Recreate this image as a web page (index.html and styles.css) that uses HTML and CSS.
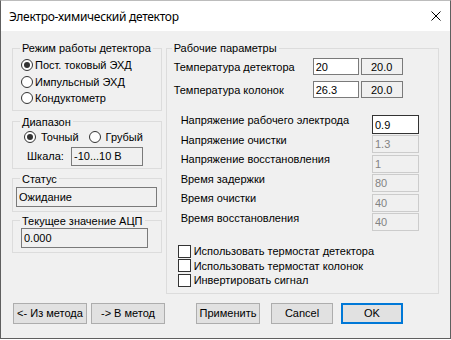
FILE: index.html
```html
<!DOCTYPE html>
<html lang="ru">
<head>
  <meta charset="UTF-8">
  <title>Электро-химический детектор</title>
  <link rel="stylesheet" href="styles.css">
</head>
<body>
  <div class="window">
    <div class="titlebar">
      <span class="title">Электро-химический детектор</span>
      <svg class="close" width="10" height="10" viewBox="0 0 10 10">
        <path d="M0.5 0.5 L9.5 9.5 M9.5 0.5 L0.5 9.5" stroke="#000" stroke-width="1" fill="none"/>
      </svg>
    </div>

    <div class="client">
      <div class="main">
        <div class="left">
          <fieldset class="group mode">
            <legend>Режим работы детектора</legend>
            <div class="inner">
              <div class="radio-row"><span class="radio checked"></span>Пост. токовый ЭХД</div>
              <div class="radio-row"><span class="radio"></span>Импульсный ЭХД</div>
              <div class="radio-row"><span class="radio"></span>Кондуктометр</div>
            </div>
          </fieldset>

          <fieldset class="group range">
            <legend>Диапазон</legend>
            <div class="inner">
              <div class="radio-line">
                <div class="radio-row wide"><span class="radio checked"></span>Точный</div>
                <div class="radio-row wide"><span class="radio"></span>Грубый</div>
              </div>
              <div class="scale-row">
                <span class="scale-label">Шкала:</span>
                <input class="field readonly scale" type="text" value="-10...10 В" readonly>
              </div>
            </div>
          </fieldset>

          <fieldset class="group status">
            <legend>Статус</legend>
            <div class="inner">
              <input class="field readonly status-field" type="text" value="Ожидание" readonly>
            </div>
          </fieldset>

          <fieldset class="group adc">
            <legend>Текущее значение АЦП</legend>
            <div class="inner">
              <input class="field readonly adc-field" type="text" value="0.000" readonly>
            </div>
          </fieldset>
        </div>

        <fieldset class="group params">
          <legend>Рабочие параметры</legend>
          <div class="inner">
            <div class="temp-row">
              <span class="temp-label">Температура детектора</span>
              <input class="field temp-set" type="text" value="20">
              <input class="field readonly temp-cur" type="text" value="20.0" readonly>
            </div>
            <div class="temp-row">
              <span class="temp-label">Температура колонок</span>
              <input class="field temp-set" type="text" value="26.3">
              <input class="field readonly temp-cur" type="text" value="20.0" readonly>
            </div>

            <div class="volt-list">
              <div class="volt-row">
                <span>Напряжение рабочего электрода</span>
                <input class="field volt active" type="text" value="0.9">
              </div>
              <div class="volt-row">
                <span>Напряжение очистки</span>
                <input class="field volt" type="text" value="1.3" disabled>
              </div>
              <div class="volt-row">
                <span>Напряжение восстановления</span>
                <input class="field volt" type="text" value="1" disabled>
              </div>
              <div class="volt-row">
                <span>Время задержки</span>
                <input class="field volt" type="text" value="80" disabled>
              </div>
              <div class="volt-row">
                <span>Время очистки</span>
                <input class="field volt" type="text" value="40" disabled>
              </div>
              <div class="volt-row">
                <span>Время восстановления</span>
                <input class="field volt" type="text" value="40" disabled>
              </div>
            </div>

            <div class="checks">
              <div class="check-row"><span class="checkbox"></span>Использовать термостат детектора</div>
              <div class="check-row"><span class="checkbox"></span>Использовать термостат колонок</div>
              <div class="check-row"><span class="checkbox"></span>Инвертировать сигнал</div>
            </div>
          </div>
        </fieldset>
      </div>

      <div class="buttons">
        <button class="btn from-method">&lt;- Из метода</button>
        <button class="btn to-method">-&gt; В метод</button>
        <button class="btn apply">Применить</button>
        <button class="btn cancel">Cancel</button>
        <button class="btn ok">OK</button>
      </div>
    </div>
  </div>
</body>
</html>
```

FILE: styles.css
```css
body {
  margin: 0;
  font-family: "Liberation Sans", Arial, sans-serif;
  font-size: 11px;
  color: #000;
  background: #fff;
}
.window {
  width: 451px;
  height: 339px;
  box-sizing: border-box;
  border: 1px solid #5f5f5f;
  border-top-color: #bcbcbc;
  background: #f0f0f0;
}
.titlebar {
  height: 30px;
  background: #fff;
  display: flex;
  align-items: center;
  justify-content: space-between;
  padding: 0 9px 0 8px;
}
.title {
  font-family: "Noto Sans", "Open Sans", sans-serif;
  font-size: 12px;
  letter-spacing: -0.3px;
}
.close {
  display: block;
}
.client {
  padding: 0 11px;
}
.main {
  display: flex;
  gap: 4px;
}
.left {
  width: 150px;
}

/* group boxes */
.group {
  margin: 0;
  padding: 0;
  border: 1px solid #dcdcdc;
  min-width: 0;
}
.group legend {
  margin-left: 7px;
  padding: 0 2px;
  line-height: 14px;
  white-space: nowrap;
}
.mode {
  margin-top: 10px;
}
.mode .inner {
  padding: 2px 0 3px 8px;
}
.range {
  margin-top: 4px;
}
.range .inner {
  padding: 1px 0 2px 11px;
}
.status {
  margin-top: 3px;
}
.status .inner {
  padding: 1px 0 4px 3px;
}
.adc {
  margin-top: 2px;
}
.adc .inner {
  padding: 0 0 4px 8px;
}
.params {
  width: 274px;
  box-sizing: border-box;
  margin-top: 10px;
}
.params legend {
  margin-left: 5px;
}
.params .inner {
  padding: 3px 0 5px 7px;
}

/* radios and checkboxes */
.radio-row {
  display: flex;
  align-items: center;
  gap: 2px;
  height: 16.5px;
}
.radio-row.wide {
  gap: 5px;
  height: 14px;
}
.radio-line {
  display: flex;
  gap: 10px;
}
.radio {
  width: 12px;
  height: 12px;
  box-sizing: border-box;
  border: 1px solid #333;
  border-radius: 50%;
  background: #fff;
  display: flex;
  align-items: center;
  justify-content: center;
}
.radio.checked::after {
  content: "";
  width: 6px;
  height: 6px;
  border-radius: 50%;
  background: #333;
}
.checks {
  margin-top: 13px;
}
.check-row {
  display: flex;
  align-items: center;
  gap: 3px;
  height: 14.5px;
  padding-left: 4px;
}
.checkbox {
  width: 13px;
  height: 13px;
  box-sizing: border-box;
  border: 1px solid #333;
  background: #fff;
}

/* text fields */
.field {
  display: block;
  margin: 0;
  box-sizing: border-box;
  border: 1px solid #7a7a7a;
  background: #fff;
  font-family: inherit;
  font-size: 11px;
  color: #000;
  padding: 0 2px;
  outline: none;
}
.field.readonly {
  background: #f0f0f0;
}
.scale-row {
  display: flex;
  align-items: center;
  margin-top: 3px;
}
.scale-label {
  width: 47px;
  padding-left: 3px;
  box-sizing: border-box;
}
.scale {
  width: 72px;
  height: 19px;
}
.status-field {
  width: 141px;
  height: 20px;
}
.adc-field {
  width: 127px;
  height: 20px;
}
.temp-row {
  display: flex;
  align-items: center;
  height: 17px;
  margin-bottom: 6px;
}
.temp-label {
  width: 139px;
}
.temp-set {
  width: 46px;
  height: 17px;
}
.temp-cur {
  width: 42px;
  height: 17px;
  margin-left: 2px;
  text-align: center;
}
.volt-list {
  margin-top: 16px;
  padding-left: 7px;
}
.volt-row {
  display: flex;
  justify-content: space-between;
  height: 19.5px;
  line-height: 12px;
  padding-right: 19px;
}
.volt {
  width: 47px;
  height: 18px;
  margin-top: 1.5px;
}
.volt:disabled {
  background: #f0f0f0;
  border-color: #cccccc;
  color: #838383;
}
.volt.active {
  height: 19px;
  margin-top: 1px;
  border-color: #333;
}

/* buttons */
.buttons {
  display: flex;
  margin-top: 9px;
}
.btn {
  height: 21px;
  margin: 0;
  padding: 0;
  border: 1px solid #adadad;
  background: #e1e1e1;
  font-family: inherit;
  font-size: 11px;
  color: #000;
}
.from-method {
  width: 74px;
  margin-left: 1px;
}
.to-method {
  width: 74px;
  margin-left: 4px;
}
.apply {
  width: 64px;
  margin-left: 31px;
}
.cancel {
  width: 62px;
  margin-left: 11px;
}
.ok {
  width: 62px;
  margin-left: 8px;
  border: 2px solid #0078d7;
}
```
